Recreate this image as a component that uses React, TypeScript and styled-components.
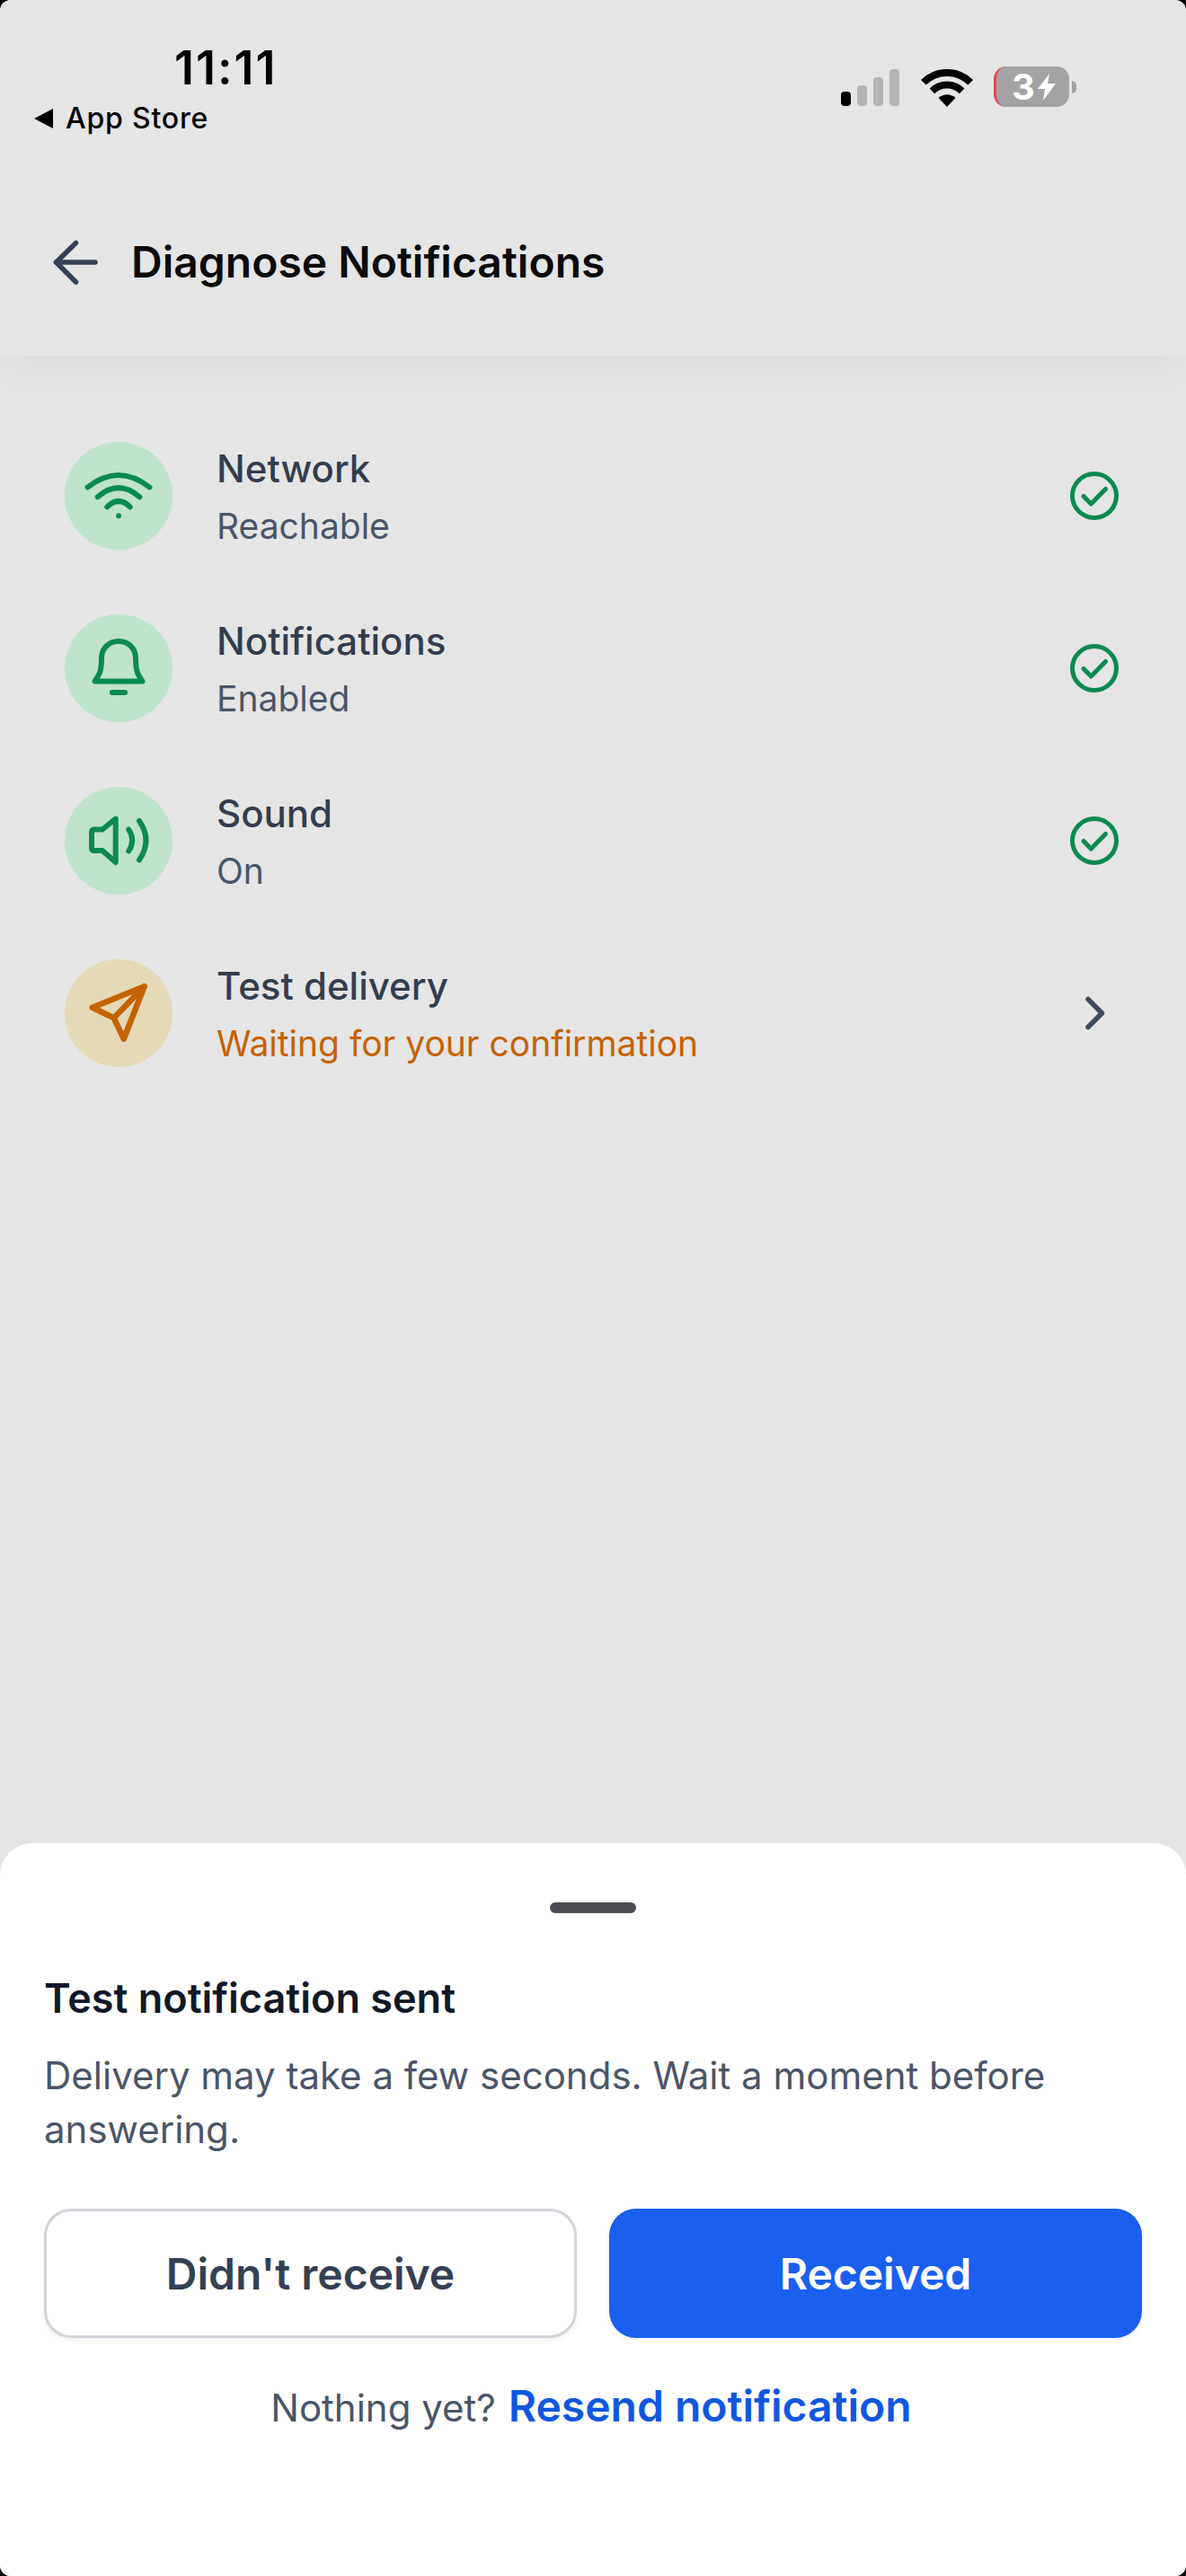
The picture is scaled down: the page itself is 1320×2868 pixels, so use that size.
import React from "react";
import styled, { createGlobalStyle } from "styled-components";

const GlobalStyle = createGlobalStyle`
  html, body {
    margin: 0;
    padding: 0;
    background: #000;
  }
  * {
    box-sizing: border-box;
  }
`;

type Tone = "green" | "orange";

const rows: { title: string; status: string; icon: React.ReactNode; tone: Tone; pending?: boolean }[] = [
  { title: "Network", status: "Reachable", icon: <WifiGlyph />, tone: "green" },
  { title: "Notifications", status: "Enabled", icon: <BellGlyph />, tone: "green" },
  { title: "Sound", status: "On", icon: <SoundGlyph />, tone: "green" },
  { title: "Test delivery", status: "Waiting for your confirmation", icon: <SendGlyph />, tone: "orange", pending: true },
];

function WifiGlyph() {
  return (
    <svg width="120" height="120" viewBox="0 0 120 120" fill="none" stroke="#0b8a50" strokeWidth="6" strokeLinecap="round">
      <path d="M25.5 50.5Q60 23.5 94.5 50.5" />
      <path d="M36.7 61.3Q60 41 83.3 61.3" />
      <path d="M47.3 72.3Q60 59.7 72.7 72.3" />
      <circle cx="60" cy="82.3" r="3" fill="#0b8a50" stroke="none" />
    </svg>
  );
}

function BellGlyph() {
  return (
    <svg width="120" height="120" viewBox="0 0 120 120" fill="none" stroke="#0b8a50" strokeWidth="6" strokeLinecap="round" strokeLinejoin="round">
      <path d="M60 30C49 30 41 38 41 49C41 58 40 65 37 69L33.5 74.5H86.5L83 69C80 65 79 58 79 49C79 38 71 30 60 30Z" />
      <path d="M53 87H67" />
    </svg>
  );
}

function SoundGlyph() {
  return (
    <svg width="120" height="120" viewBox="0 0 120 120" fill="none" stroke="#0b8a50" strokeWidth="6" strokeLinecap="round" strokeLinejoin="round">
      <path d="M56.7 35.5L42 47.5H33Q30 47.5 30 50.5V68Q30 71 33 71H42L56.7 84Z" />
      <path d="M71.3 47.5Q79 59.5 71.3 71.5" />
      <path d="M83 38Q98 59.5 83 81.5" />
    </svg>
  );
}

function SendGlyph() {
  return (
    <svg width="120" height="120" viewBox="0 0 120 120" fill="none" stroke="#c46200" strokeWidth="6.5" strokeLinecap="round" strokeLinejoin="round">
      <path d="M88.7 30.3L30.7 53.7L54.7 65.3L65.7 88.7Z" />
      <path d="M88.7 30.3L54.7 65.3" />
    </svg>
  );
}

function CheckGlyph() {
  return (
    <svg width="54" height="54" viewBox="0 0 54 54" fill="none" stroke="#0b8a50" strokeWidth="5" strokeLinecap="round" strokeLinejoin="round">
      <circle cx="27" cy="27" r="24.5" />
      <path d="M15 27.5L23.3 36L39.5 19.5" />
    </svg>
  );
}

function ChevronGlyph() {
  return (
    <svg width="54" height="54" viewBox="0 0 54 54" fill="none" stroke="#3f4a5c" strokeWidth="5.5" strokeLinecap="round" strokeLinejoin="round">
      <path d="M20 11.5L35.5 27L20 42.5" />
    </svg>
  );
}

function BackGlyph() {
  return (
    <svg width="54" height="54" viewBox="0 0 54 54" fill="none" stroke="#344054" strokeWidth="5.5" strokeLinecap="round" strokeLinejoin="round">
      <path d="M48 27H4.5" />
      <path d="M26.5 5.5L4.5 27L26.5 49" />
    </svg>
  );
}

function SignalGlyph() {
  return (
    <svg width="66" height="42" viewBox="0 0 66 42">
      <rect x="0" y="25" width="11" height="16" rx="4" fill="#000" />
      <rect x="18" y="18" width="11" height="23" rx="4" fill="#b4b4b4" />
      <rect x="36" y="9" width="11" height="32" rx="4" fill="#b4b4b4" />
      <rect x="54" y="0" width="11" height="41" rx="4" fill="#b4b4b4" />
    </svg>
  );
}

function StatusWifiGlyph() {
  return (
    <svg width="58" height="42" viewBox="0 0 58 42" fill="none" stroke="#000" strokeWidth="8">
      <path d="M2.8 14.8A37 37 0 0 1 55.2 14.8" />
      <path d="M12.4 24.4A23.5 23.5 0 0 1 45.6 24.4" />
      <path d="M29 42L19.5 32Q29 24.5 38.5 32Z" fill="#000" stroke="none" />
    </svg>
  );
}

function BoltGlyph() {
  return (
    <svg width="20" height="30" viewBox="0 0 20 30" fill="#fff">
      <path d="M13 0L0 17H8L6 30L20 11H11Z" />
    </svg>
  );
}

export default function App() {
  return (
    <>
      <GlobalStyle />
      <Screen>
        <Header>
          <StatusBar>
            <StatusLeft>
              <Clock>11:11</Clock>
              <BackLink>
                <BackCaret />
                App Store
              </BackLink>
            </StatusLeft>
            <StatusRight>
              <SignalGlyph />
              <StatusWifiGlyph />
              <BatteryWrap>
                <Battery>
                  <BatteryLevel>3</BatteryLevel>
                  <BoltGlyph />
                </Battery>
                <BatteryNub />
              </BatteryWrap>
            </StatusRight>
          </StatusBar>
          <TitleBar>
            <BackButton>
              <BackGlyph />
            </BackButton>
            <PageTitle>Diagnose Notifications</PageTitle>
          </TitleBar>
        </Header>

        <List>
          {rows.map((row) => (
            <Row key={row.title}>
              <IconCircle $tone={row.tone}>{row.icon}</IconCircle>
              <RowText>
                <RowTitle>{row.title}</RowTitle>
                <RowStatus $pending={row.pending}>{row.status}</RowStatus>
              </RowText>
              <RowEnd>{row.pending ? <ChevronGlyph /> : <CheckGlyph />}</RowEnd>
            </Row>
          ))}
        </List>

        <Sheet>
          <Handle />
          <SheetTitle>Test notification sent</SheetTitle>
          <SheetBody>Delivery may take a few seconds. Wait a moment before answering.</SheetBody>
          <Actions>
            <OutlineButton>Didn't receive</OutlineButton>
            <PrimaryButton>Received</PrimaryButton>
          </Actions>
          <Footer>
            <FooterNote>Nothing yet?</FooterNote>
            <ResendLink>Resend notification</ResendLink>
          </Footer>
        </Sheet>
      </Screen>
    </>
  );
}

const Screen = styled.div`
  width: 1320px;
  height: 2868px;
  display: flex;
  flex-direction: column;
  border-radius: 12px;
  background: #e5e5e5;
  font-family: Inter, "Liberation Sans", sans-serif;
  overflow: hidden;
`;

const Header = styled.header`
  height: 396px;
  flex-shrink: 0;
  background: #e5e5e5;
  box-shadow: 0 16px 48px rgba(0, 0, 0, 0.045);
`;

const StatusBar = styled.div`
  height: 204px;
  display: flex;
  justify-content: space-between;
  align-items: flex-start;
  padding: 44px 122px 0 38px;
`;

const StatusLeft = styled.div`
  display: flex;
  flex-direction: column;
`;

const Clock = styled.div`
  margin-left: 156px;
  font-size: 52px;
  line-height: 64px;
  font-weight: 600;
  letter-spacing: 2px;
  color: #000;
`;

const BackLink = styled.div`
  display: flex;
  align-items: center;
  gap: 14px;
  margin-top: 4px;
  font-size: 32px;
  line-height: 40px;
  font-weight: 500;
  letter-spacing: 0.8px;
  color: #000;
`;

const BackCaret = styled.span`
  width: 0;
  height: 0;
  border-style: solid;
  border-width: 11px 21px 11px 0;
  border-color: transparent #000 transparent transparent;
`;

const StatusRight = styled.div`
  display: flex;
  align-items: flex-end;
  gap: 23px;
  margin-top: 30px;
`;

const BatteryWrap = styled.div`
  display: flex;
  align-items: center;
  gap: 3px;
`;

const Battery = styled.div`
  width: 84px;
  height: 45px;
  display: flex;
  align-items: center;
  justify-content: center;
  gap: 3px;
  padding-left: 2px;
  border-radius: 14px;
  border-left: 3px solid #e5484d;
  background: #a3a3a3;
`;

const BatteryLevel = styled.span`
  font-size: 40px;
  line-height: 45px;
  font-weight: 700;
  color: #fff;
`;

const BatteryNub = styled.span`
  width: 5px;
  height: 14px;
  border-radius: 0 5px 5px 0;
  background: #a3a3a3;
`;

const TitleBar = styled.div`
  display: flex;
  align-items: center;
  gap: 34px;
  padding: 0 0 0 58px;
  height: 176px;
`;

const BackButton = styled.div`
  display: flex;
  width: 54px;
  height: 54px;
`;

const PageTitle = styled.h1`
  margin: 0;
  font-size: 48px;
  line-height: 60px;
  font-weight: 600;
  color: #0a0a0a;
`;

const List = styled.div`
  display: flex;
  flex-direction: column;
  gap: 72px;
  padding: 96px 75px 0 72px;
`;

const Row = styled.div`
  display: flex;
  align-items: center;
  height: 120px;
`;

const IconCircle = styled.div<{ $tone: Tone }>`
  width: 120px;
  height: 120px;
  flex-shrink: 0;
  display: flex;
  border-radius: 50%;
  background: ${(p) => (p.$tone === "green" ? "#bfe3cb" : "#e5d9b6")};
`;

const RowText = styled.div`
  flex: 1;
  display: flex;
  flex-direction: column;
  gap: 8px;
  margin: 4px 0 0 49px;
`;

const RowTitle = styled.div`
  font-size: 42px;
  line-height: 56px;
  font-weight: 500;
  color: #333d4e;
`;

const RowStatus = styled.div<{ $pending?: boolean }>`
  font-size: 39px;
  line-height: 56px;
  font-weight: 400;
  color: ${(p) => (p.$pending ? "#c46200" : "#4a5568")};
`;

const RowEnd = styled.div`
  width: 54px;
  height: 54px;
  flex-shrink: 0;
  display: flex;
`;

const Sheet = styled.section`
  margin-top: auto;
  height: 816px;
  flex-shrink: 0;
  padding: 66px 49px 0;
  border-radius: 36px 36px 0 0;
  background: #fff;
`;

const Handle = styled.div`
  width: 96px;
  height: 12px;
  margin: 0 auto;
  border-radius: 6px;
  background: #4b4d52;
`;

const SheetTitle = styled.h2`
  margin: 65px 0 0;
  font-size: 45px;
  line-height: 60px;
  font-weight: 600;
  color: #111827;
`;

const SheetBody = styled.p`
  margin: 26px 0 0;
  font-size: 42px;
  line-height: 60px;
  font-weight: 400;
  color: #4a5568;
`;

const Actions = styled.div`
  display: grid;
  grid-template-columns: 1fr 1fr;
  gap: 36px;
  margin-top: 58px;
`;

const OutlineButton = styled.button`
  height: 144px;
  padding: 0;
  border: 3px solid #d1d5db;
  border-radius: 30px;
  background: #fff;
  box-shadow: 0 3px 6px rgba(0, 0, 0, 0.05);
  font-family: inherit;
  font-size: 48px;
  font-weight: 600;
  color: #344054;
`;

const PrimaryButton = styled.button`
  height: 144px;
  padding: 0;
  border: 0;
  border-radius: 30px;
  background: #1a5ff0;
  box-shadow: 0 3px 6px rgba(0, 0, 0, 0.05);
  font-family: inherit;
  font-size: 48px;
  font-weight: 600;
  color: #fff;
`;

const Footer = styled.div`
  display: flex;
  justify-content: center;
  align-items: baseline;
  gap: 14px;
  margin-top: 44px;
  padding-right: 4px;
`;

const FooterNote = styled.span`
  font-size: 42px;
  line-height: 64px;
  color: #4a5568;
`;

const ResendLink = styled.span`
  font-size: 48px;
  line-height: 64px;
  font-weight: 600;
  color: #0f57e0;
`;
